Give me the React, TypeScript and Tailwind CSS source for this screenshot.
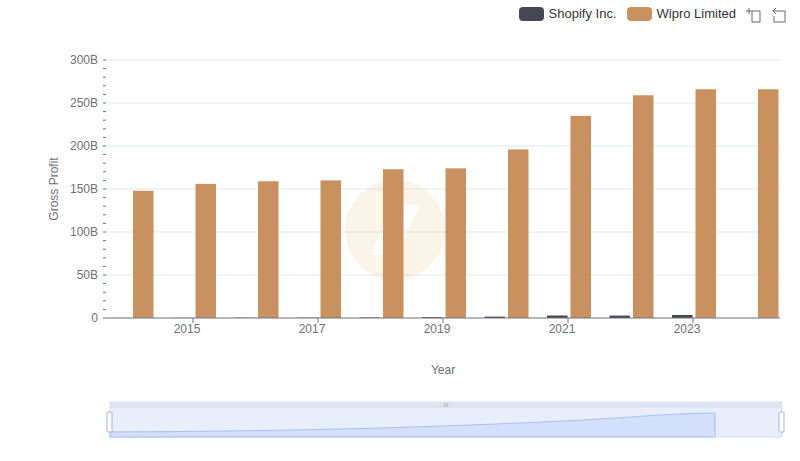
export default function App() {
  const wipro = [148, 156, 159, 160, 173, 174, 196, 235, 259, 266, 266];
  const shop = [0.1, 0.2, 0.3, 0.4, 0.6, 1.0, 1.6, 2.9, 2.8, 3.5, 0];
  const y = (v: number) => 318 - (v / 50) * 43;
  const cx = (i: number) => 130.5 + 62.5 * i;
  const minor: number[] = [];
  for (let v = 0; v <= 300; v += 10) minor.push(v);
  return (
    <div className="w-[800px] h-[461px] bg-white relative overflow-hidden" style={{ fontFamily: "'Liberation Sans', Arial, sans-serif" }}>
      <div className="flex items-center justify-end gap-2 pt-[4px] pr-[12px] h-[24px] text-[13px] text-[#333]">
        <div className="flex items-center gap-[5px]">
          <span className="w-[25px] h-[14px] rounded-[4px] bg-[#464655] inline-block" />
          <span>Shopify Inc.</span>
        </div>
        <div className="flex items-center gap-[5px] ml-[2px]">
          <span className="w-[25px] h-[14px] rounded-[4px] bg-[#c8915f] inline-block" />
          <span>Wipro Limited</span>
        </div>
        <svg width="44" height="20" viewBox="0 0 44 20" fill="none" stroke="#666" strokeWidth="1">
          <path d="M2 7h6M5 4v6M8 7h8v11H8z" />
          <path d="M32 4l-3 3 3 3M29 7h12v11H30V12" />
        </svg>
      </div>
      <svg width="800" height="437" className="block" style={{ fontFamily: "'Liberation Sans', Arial, sans-serif" }}>
        <g transform="translate(0,-24)">
          {[0, 50, 100, 150, 200, 250, 300].map((v) => (
            <g key={v}>
              {v > 0 && <line x1="106" x2="780" y1={y(v)} y2={y(v)} stroke="#e0e6f1" />}
              <text x="98" y={y(v) + 4} textAnchor="end" fontSize="12" fill="#6e7079">{v === 0 ? "0" : `${v}B`}</text>
            </g>
          ))}
          {minor.map((v) => (
            <line key={v} x1="103" x2="106" y1={y(v)} y2={y(v)} stroke="#6e7079" />
          ))}
          <text transform="translate(58,189) rotate(-90)" textAnchor="middle" fontSize="12" fill="#6e7079">Gross Profit</text>
          <g opacity="0.13">
            <circle cx="395" cy="230" r="50" fill="#e8b060" />
            <path d="M370 255 L395 205 L420 205 L395 255Z" fill="#fff" />
          </g>
          {wipro.map((v, i) => (
            <rect key={i} x={cx(i) + 2.5} y={y(v)} width="20.5" height={318 - y(v)} fill="#c8915f" />
          ))}
          {shop.map((v, i) => (
            <rect key={i} x={cx(i) - 21} y={y(v)} width="20.5" height={318 - y(v)} fill="#464655" />
          ))}
          <line x1="106" x2="780" y1="318" y2="318" stroke="#6e7079" />
          {[2015, 2017, 2019, 2021, 2023].map((yr, k) => (
            <g key={yr}>
              <line x1={cx(1 + 2 * k)} x2={cx(1 + 2 * k)} y1="318" y2="323" stroke="#6e7079" />
              <text x={cx(1 + 2 * k) - 6} y="333" textAnchor="middle" fontSize="12" fill="#6e7079">{yr}</text>
            </g>
          ))}
          <text x="443" y="374" textAnchor="middle" fontSize="12" fill="#6e7079">Year</text>
          <rect x="110" y="402" width="672" height="35" fill="#e8eefc" stroke="#d2dbee" />
          <rect x="110" y="402" width="672" height="6" fill="#dde3f1" />
          <path d="M110 432 C300 431 400 428 520 423 S650 414 715 413 L715 437 L110 437Z" fill="#d2e0fb" stroke="#a7c0f3" strokeWidth="1" />
          <text x="446" y="407" textAnchor="middle" fontSize="6" fill="#aaa">III</text>
          <rect x="107" y="412" width="5" height="20" rx="1" fill="#fff" stroke="#a9b4c9" />
          <rect x="779" y="412" width="5" height="20" rx="1" fill="#fff" stroke="#a9b4c9" />
        </g>
      </svg>
    </div>
  );
}
